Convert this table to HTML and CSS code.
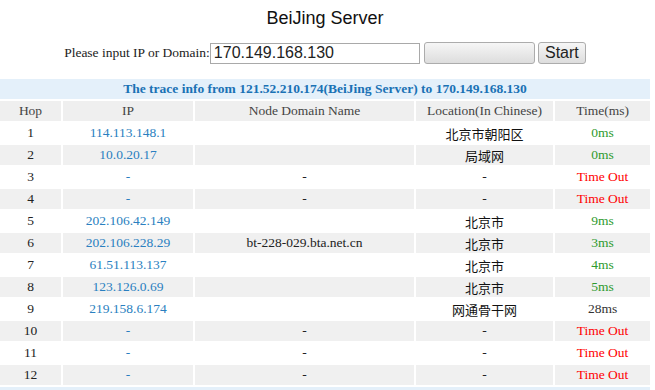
FILE: index.html
```html
<!DOCTYPE html>
<html>
<head>
<meta charset="utf-8">
<title>BeiJing Server</title>
<link rel="stylesheet" href="styles.css">
</head>
<body>
<div class="page">
  <h1 class="server">BeiJing Server</h1>
  <form class="query">
    <label class="query-label" for="host">Please input IP or Domain:</label>
    <input class="query-input" id="host" type="text" value="170.149.168.130">
    <button class="btn btn-blank" type="button"></button>
    <button class="btn btn-start" type="button">Start</button>
  </form>
  <table class="trace">
    <colgroup>
      <col class="c-hop">
      <col class="c-ip">
      <col class="c-node">
      <col class="c-loc">
      <col class="c-time">
    </colgroup>
    <thead>
      <tr><td class="trace-title" colspan="5">The trace info from 121.52.210.174(BeiJing Server) to 170.149.168.130</td></tr>
      <tr class="head">
        <th>Hop</th>
        <th>IP</th>
        <th>Node Domain Name</th>
        <th>Location(In Chinese)</th>
        <th>Time(ms)</th>
      </tr>
    </thead>
    <tbody>
      <tr><td>1</td><td class="ip">114.113.148.1</td><td></td><td class="cn">北京市朝阳区</td><td class="ok">0ms</td></tr>
      <tr><td>2</td><td class="ip">10.0.20.17</td><td></td><td class="cn">局域网</td><td class="ok">0ms</td></tr>
      <tr><td>3</td><td class="ip">-</td><td>-</td><td>-</td><td class="out">Time Out</td></tr>
      <tr><td>4</td><td class="ip">-</td><td>-</td><td>-</td><td class="out">Time Out</td></tr>
      <tr><td>5</td><td class="ip">202.106.42.149</td><td></td><td class="cn">北京市</td><td class="ok">9ms</td></tr>
      <tr><td>6</td><td class="ip">202.106.228.29</td><td>bt-228-029.bta.net.cn</td><td class="cn">北京市</td><td class="ok">3ms</td></tr>
      <tr><td>7</td><td class="ip">61.51.113.137</td><td></td><td class="cn">北京市</td><td class="ok">4ms</td></tr>
      <tr><td>8</td><td class="ip">123.126.0.69</td><td></td><td class="cn">北京市</td><td class="ok">5ms</td></tr>
      <tr><td>9</td><td class="ip">219.158.6.174</td><td></td><td class="cn">网通骨干网</td><td class="slow">28ms</td></tr>
      <tr><td>10</td><td class="ip">-</td><td>-</td><td>-</td><td class="out">Time Out</td></tr>
      <tr><td>11</td><td class="ip">-</td><td>-</td><td>-</td><td class="out">Time Out</td></tr>
      <tr><td>12</td><td class="ip">-</td><td>-</td><td>-</td><td class="out">Time Out</td></tr>
    </tbody>
    <tfoot>
      <tr><td class="trace-foot" colspan="5"></td></tr>
    </tfoot>
  </table>
</div>
</body>
</html>
```
FILE: styles.css
```css
html, body {
  margin: 0;
  padding: 0;
  background: #ffffff;
}

.page {
  width: 650px;
  font-family: "Liberation Serif", "Times New Roman", serif;
  color: #333333;
}

.server {
  margin: 6px 0 0;
  font-family: "Liberation Sans", Arial, sans-serif;
  font-size: 18px;
  font-weight: normal;
  line-height: 24px;
  text-align: center;
  color: #111111;
}

.query {
  display: flex;
  justify-content: center;
  align-items: center;
  margin: 12px 0 0;
  height: 22px;
}

.query-label {
  font-size: 13.5px;
  color: #222222;
}

.query-input {
  box-sizing: border-box;
  width: 210px;
  height: 21px;
  margin: 0 4px 0 0;
  padding: 0 0 0 3px;
  border: 1px solid #a9a9a9;
  font-family: "Liberation Sans", Arial, sans-serif;
  font-size: 16px;
  color: #222222;
  background: #ffffff;
}

.btn {
  box-sizing: border-box;
  height: 22px;
  margin: 0;
  padding: 0;
  border: 1px solid #acacac;
  border-radius: 3px;
  background: linear-gradient(#f6f6f6, #dddddd);
  font-family: "Liberation Sans", Arial, sans-serif;
  font-size: 16px;
  color: #222222;
}

.btn-blank {
  width: 111px;
  margin-right: 3px;
}

.btn-start {
  width: 48px;
}

.trace {
  width: 654px;
  margin: 13px 0 0 -2px;
  border-collapse: separate;
  border-spacing: 2px;
  table-layout: fixed;
  font-size: 13.5px;
}

.c-hop { width: 61px; }
.c-ip { width: 130px; }
.c-node { width: 219px; }
.c-loc { width: 137px; }
.c-time { width: 95px; }

.trace td,
.trace th {
  height: 20px;
  padding: 0;
  text-align: center;
  vertical-align: middle;
  font-weight: normal;
  white-space: nowrap;
}

.trace .trace-title {
  background: #e4f0fa;
  color: #1a72b5;
  font-weight: bold;
}

.trace-foot {
  background: #e4f0fa;
}

.head th {
  background: #efefef;
  color: #444444;
}

.trace tbody tr:nth-child(even) td {
  background: #f0f0f0;
}

.trace tbody td {
  color: #222222;
}

.trace tbody td.ip {
  color: #2a7fc0;
}

.trace tbody td.cn {
  font-family: "Noto Sans CJK SC", sans-serif;
  font-size: 13px;
  color: #111111;
}

.trace tbody td.ok {
  color: #2e9a2e;
}

.trace tbody td.out {
  color: #ff0000;
}

.trace tbody td.slow {
  color: #333333;
}
```
